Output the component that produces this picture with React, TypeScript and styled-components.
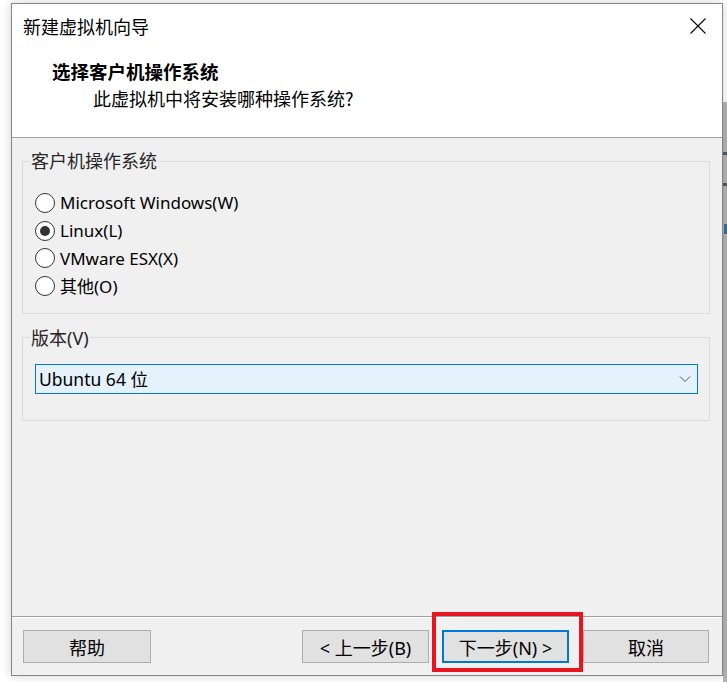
import React from "react";
import styled, { createGlobalStyle } from "styled-components";

const GlobalStyle = createGlobalStyle`
  html, body { margin: 0; padding: 0; background: #ffffff; }
  body {
    width: 727px; height: 682px; overflow: hidden;
    font-family: "Noto Sans", "Noto Sans CJK SC", sans-serif;
    color: #000;
  }
  * { box-sizing: border-box; }
`;

const Desktop = styled.div`
  position: relative;
  display: flex;
  align-items: flex-start;
  height: 682px;
  width: 727px;
`;

const Window = styled.div`
  position: relative;
  z-index: 1;
  margin: 3px 0 0 11px;
  width: 712px;
  height: 673px;
  border: 1px solid #858585;
  background: #f0f0f0;
  display: flex;
  flex-direction: column;
  box-shadow: 0 0 10px rgba(0, 0, 0, 0.18);
`;

const BackWindow = styled.div`
  margin-top: 102px;
  flex: 1;
  height: 580px;
  background:
    linear-gradient(#4d5c6b, #4d5c6b) 0 50px / 100% 3px no-repeat,
    linear-gradient(#4d5c6b, #4d5c6b) 0 81px / 100% 3px no-repeat,
    linear-gradient(#3a6ea5, #3a6ea5) 1px 122px / 100% 10px no-repeat,
    #b4b4b4;
`;

const Header = styled.div`
  height: 134px;
  background: #ffffff;
  border-bottom: 1px solid #a0a0a0;
  display: flex;
  flex-direction: column;
`;

const TitleBar = styled.div`
  height: 44px;
  display: flex;
  align-items: center;
  justify-content: space-between;
  padding: 0 16px 0 11px;
`;

const TitleText = styled.div`
  font-family: "Noto Sans CJK SC", sans-serif;
  font-size: 18px;
  line-height: 24px;
`;

const CloseIcon = styled.svg`
  width: 16px;
  height: 16px;
  display: block;
`;

const Heading = styled.div`
  margin: 11px 0 0 40px;
  font-family: "Noto Sans CJK SC", sans-serif;
  font-size: 18.5px;
  font-weight: 700;
  line-height: 24px;
`;

const SubHeading = styled.div`
  margin: 3px 0 0 81px;
  font-family: "Noto Sans CJK SC", sans-serif;
  font-size: 18px;
  line-height: 24px;
`;

const Body = styled.div`
  flex: 1;
  padding: 11px 12px 0 10px;
  display: flex;
  flex-direction: column;
`;

const Group = styled.fieldset<{ $top?: number }>`
  margin: ${(p) => p.$top ?? 0}px 0 0 0;
  padding: 0;
  min-width: 0;
  border: 1px solid #dcdcdc;
`;

const Legend = styled.legend`
  margin-left: 7px;
  padding: 0 1px;
  font-family: "Noto Sans", "Noto Sans CJK SC", sans-serif;
  font-size: 18px;
  line-height: 24px;
  color: #262626;
`;

const RadioList = styled.div`
  padding: 16px 12px 13px 12px;
  display: flex;
  flex-direction: column;
`;

const RadioRow = styled.label`
  height: 27.7px;
  display: flex;
  align-items: center;
  gap: 5px;
  font-size: 17px;
  font-family: "Noto Sans", "Noto Sans CJK SC", sans-serif;
`;

const RadioCircle = styled.span<{ $checked?: boolean }>`
  width: 20px;
  height: 20px;
  border-radius: 50%;
  border: 1.5px solid #333333;
  background: #ffffff;
  display: flex;
  align-items: center;
  justify-content: center;
  &::after {
    content: "";
    width: 10px;
    height: 10px;
    border-radius: 50%;
    background: ${(p) => (p.$checked ? "#333333" : "transparent")};
  }
`;

const SelectWrap = styled.div`
  padding: 14px 11px 26px 12px;
`;

const SelectBox = styled.div`
  height: 30px;
  border: 1px solid #0078d7;
  background: #e5f1fb;
  display: flex;
  align-items: center;
  justify-content: space-between;
  padding: 0 6px 0 3px;
  font-size: 17.5px;
  font-family: "Noto Sans", "Noto Sans CJK SC", sans-serif;
`;

const Chevron = styled.svg`
  width: 12px;
  height: 8px;
  display: block;
`;

const Footer = styled.div`
  border-top: 1px solid #a0a0a0;
  box-shadow: inset 0 1px 0 #ffffff;
  padding: 13px 13px 12px 11px;
  display: flex;
  align-items: center;
`;

const Button = styled.div<{ $w: number; $gap?: number; $auto?: boolean; $focused?: boolean }>`
  width: ${(p) => p.$w}px;
  height: 33px;
  margin-left: ${(p) => (p.$auto ? "auto" : `${p.$gap ?? 0}px`)};
  background: #e1e1e1;
  border: ${(p) => (p.$focused ? "2px solid #0078d7" : "1px solid #adadad")};
  display: flex;
  align-items: center;
  justify-content: center;
  font-size: 18px;
  font-family: "Noto Sans", "Noto Sans CJK SC", sans-serif;
  color: #000;
`;

const Highlight = styled.div`
  position: absolute;
  z-index: 2;
  left: 432px;
  top: 612px;
  width: 151px;
  height: 60px;
  border: 4px solid #e8141e;
  pointer-events: none;
`;

const options = [
  { label: "Microsoft Windows(W)", checked: false },
  { label: "Linux(L)", checked: true },
  { label: "VMware ESX(X)", checked: false },
  { label: "其他(O)", checked: false },
];

export default function App() {
  return (
    <>
      <GlobalStyle />
      <Desktop>
        <Window>
          <Header>
            <TitleBar>
              <TitleText>新建虚拟机向导</TitleText>
              <CloseIcon viewBox="0 0 16 16">
                <path d="M0.5 0.5 L15.5 15.5 M15.5 0.5 L0.5 15.5" stroke="#000" strokeWidth="1.1" fill="none" />
              </CloseIcon>
            </TitleBar>
            <Heading>选择客户机操作系统</Heading>
            <SubHeading>此虚拟机中将安装哪种操作系统?</SubHeading>
          </Header>
          <Body>
            <Group>
              <Legend>客户机操作系统</Legend>
              <RadioList>
                {options.map((o) => (
                  <RadioRow key={o.label}>
                    <RadioCircle $checked={o.checked} />
                    {o.label}
                  </RadioRow>
                ))}
              </RadioList>
            </Group>
            <Group $top={12}>
              <Legend>版本(V)</Legend>
              <SelectWrap>
                <SelectBox>
                  <span>Ubuntu 64 位</span>
                  <Chevron viewBox="0 0 12 8">
                    <path d="M1 1.5 L6 6.5 L11 1.5" stroke="#555" strokeWidth="1" fill="none" />
                  </Chevron>
                </SelectBox>
              </SelectWrap>
            </Group>
          </Body>
          <Footer>
            <Button $w={128}>帮助</Button>
            <Button $w={127} $auto>
              &lt; 上一步(B)
            </Button>
            <Button $w={127} $gap={13} $focused>
              下一步(N) &gt;
            </Button>
            <Button $w={126} $gap={14}>
              取消
            </Button>
          </Footer>
        </Window>
        <BackWindow />
        <Highlight />
      </Desktop>
    </>
  );
}
